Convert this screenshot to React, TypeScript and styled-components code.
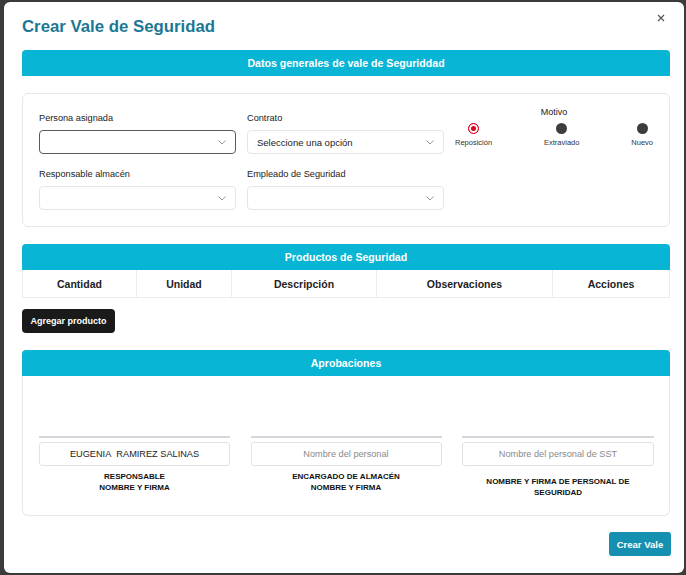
import React from "react";
import styled, { createGlobalStyle } from "styled-components";

const Global = createGlobalStyle`
  html, body { margin: 0; padding: 0; background: #3b3b3b; }
  body { font-family: "Liberation Sans", Arial, sans-serif; color: #222; }
  * { box-sizing: border-box; }
`;

const Page = styled.div`
  width: 686px;
  height: 575px;
  padding: 2px 2px 2px 4px;
  overflow: hidden;
`;

const Modal = styled.div`
  position: relative;
  height: 571px;
  background: #fff;
  border-radius: 6px;
  padding: 13px 14px 0 18px;
  display: flex;
  flex-direction: column;
`;

const Title = styled.h2`
  margin: 0;
  font-size: 16.8px;
  line-height: 24px;
  font-weight: 700;
  color: #1b7895;
`;

const Close = styled.button`
  position: absolute;
  top: 9px;
  right: 16px;
  border: 0;
  background: none;
  padding: 0;
  width: 14px;
  height: 14px;
  display: flex;
  align-items: center;
  justify-content: center;
  cursor: pointer;
`;

const Bar = styled.div<{ $mt: number }>`
  margin-top: ${(p) => p.$mt}px;
  height: 26px;
  background: #08b5d4;
  border-radius: 4px 4px 0 0;
  color: #fff;
  font-weight: 700;
  font-size: 10.6px;
  display: flex;
  align-items: center;
  justify-content: center;
`;

const Card = styled.div`
  margin-top: 17px;
  height: 134px;
  border: 1px solid #e4e7eb;
  border-radius: 6px;
  padding: 18px 16px 0 16px;
  display: grid;
  grid-template-columns: 197px 197px 1fr;
  column-gap: 11px;
  align-items: start;
  align-content: start;
`;

const Field = styled.div<{ $row?: number }>`
  display: flex;
  flex-direction: column;
  margin-top: ${(p) => (p.$row === 2 ? 14 : 0)}px;
`;

const Label = styled.label`
  font-size: 9.2px;
  line-height: 12px;
  color: #222;
  margin-bottom: 6px;
`;

const Select = styled.div<{ $focus?: boolean }>`
  height: 24px;
  border: 1px solid ${(p) => (p.$focus ? "#5a5a5a" : "#e2e5e9")};
  border-radius: 4px;
  padding: 0 9px;
  display: flex;
  align-items: center;
  justify-content: space-between;
  font-size: 9.5px;
  color: #222;
`;

const Motivo = styled.div`
  grid-row: 1 / span 2;
  grid-column: 3;
  margin-top: -6px;
  display: flex;
  flex-direction: column;
  align-items: center;
`;

const MotivoTitle = styled.div`
  font-size: 9px;
  line-height: 12px;
  color: #222;
`;

const Radios = styled.div`
  align-self: stretch;
  display: flex;
  justify-content: space-between;
  margin-top: 5px;
`;

const RadioItem = styled.div`
  display: flex;
  flex-direction: column;
  align-items: center;
  gap: 4px;
`;

const Dot = styled.span<{ $on?: boolean }>`
  width: 11px;
  height: 11px;
  border-radius: 50%;
  background: ${(p) => (p.$on ? "#e0001b" : "#3d3d3d")};
  box-shadow: ${(p) => (p.$on ? "inset 0 0 0 2px #fff" : "none")};
  border: ${(p) => (p.$on ? "1px solid #e0001b" : "0")};
`;

const RadioText = styled.span`
  font-size: 7.5px;
  line-height: 10px;
  color: #333;
`;

const Table = styled.div`
  display: grid;
  grid-template-columns: 114px 95px 145px 176px 1fr;
  height: 28px;
  border-left: 1px solid #ececec;
  border-bottom: 1px solid #ececec;
`;

const Th = styled.div`
  border-right: 1px solid #ececec;
  display: flex;
  align-items: center;
  justify-content: center;
  font-size: 10.5px;
  font-weight: 700;
  color: #222;
`;

const BlackButton = styled.button`
  margin-top: 11px;
  align-self: flex-start;
  height: 24px;
  width: 93px;
  border: 0;
  border-radius: 4px;
  background: #1a1a1a;
  color: #fff;
  font-family: inherit;
  font-size: 9px;
  font-weight: 700;
  padding: 0;
`;

const ApprovalBody = styled.div`
  height: 140px;
  border: 1px solid #e4e7eb;
  border-top: 0;
  border-radius: 0 0 6px 6px;
  padding: 60px 15px 0 16px;
  display: grid;
  grid-template-columns: 191px 191px 192px;
  justify-content: space-between;
`;

const Sign = styled.div`
  display: flex;
  flex-direction: column;
  align-items: stretch;
`;

const SignLine = styled.div`
  height: 2px;
  background: #d3d6db;
`;

const SignInput = styled.div<{ $empty?: boolean }>`
  margin-top: 4px;
  height: 24px;
  border: 1px solid #dfe2e6;
  border-radius: 3px;
  display: flex;
  align-items: center;
  justify-content: center;
  font-size: 9.2px;
  color: ${(p) => (p.$empty ? "#8a8a8a" : "#222")};
`;

const SignCaption = styled.div<{ $mt: number }>`
  margin-top: ${(p) => p.$mt}px;
  text-align: center;
  font-size: 8px;
  line-height: 11px;
  font-weight: 700;
  color: #111;
  padding: 0 12px;
`;

const Footer = styled.div`
  margin-top: 16px;
  display: flex;
  justify-content: flex-end;
  margin-right: -1px;
`;

const PrimaryButton = styled.button`
  height: 24px;
  width: 62px;
  border: 0;
  border-radius: 3px;
  background: #1690b1;
  color: #fff;
  font-family: inherit;
  font-size: 9.5px;
  font-weight: 700;
  padding: 0;
`;

const Chevron = () => (
  <svg width="8" height="5" viewBox="0 0 8 5" fill="none">
    <polyline points="0.5,0.5 4,4 7.5,0.5" stroke="#9a9a9a" strokeWidth="1" />
  </svg>
);

export default function App() {
  return (
    <>
      <Global />
      <Page>
        <Modal>
          <Title>Crear Vale de Seguridad</Title>
          <Close aria-label="Cerrar">
            <svg width="8" height="8" viewBox="0 0 8 8">
              <path d="M1 1L7 7M7 1L1 7" stroke="#555" strokeWidth="1.2" />
            </svg>
          </Close>

          <Bar $mt={11}>Datos generales de vale de Seguriddad</Bar>
          <Card>
            <Field>
              <Label>Persona asignada</Label>
              <Select $focus>
                <span />
                <Chevron />
              </Select>
            </Field>
            <Field>
              <Label>Contrato</Label>
              <Select>
                <span>Seleccione una opción</span>
                <Chevron />
              </Select>
            </Field>
            <Motivo>
              <MotivoTitle>Motivo</MotivoTitle>
              <Radios>
                <RadioItem>
                  <Dot $on />
                  <RadioText>Reposición</RadioText>
                </RadioItem>
                <RadioItem>
                  <Dot />
                  <RadioText>Extraviado</RadioText>
                </RadioItem>
                <RadioItem>
                  <Dot />
                  <RadioText>Nuevo</RadioText>
                </RadioItem>
              </Radios>
            </Motivo>
            <Field $row={2}>
              <Label>Responsable almacén</Label>
              <Select>
                <span />
                <Chevron />
              </Select>
            </Field>
            <Field $row={2}>
              <Label>Empleado de Seguridad</Label>
              <Select>
                <span />
                <Chevron />
              </Select>
            </Field>
          </Card>

          <Bar $mt={17}>Productos de Seguridad</Bar>
          <Table>
            <Th>Cantidad</Th>
            <Th>Unidad</Th>
            <Th>Descripción</Th>
            <Th>Observaciones</Th>
            <Th>Acciones</Th>
          </Table>
          <BlackButton>Agregar producto</BlackButton>

          <Bar $mt={17}>Aprobaciones</Bar>
          <ApprovalBody>
            <Sign>
              <SignLine />
              <SignInput>EUGENIA&nbsp; RAMIREZ SALINAS</SignInput>
              <SignCaption $mt={5}>
                RESPONSABLE
                <br />
                NOMBRE Y FIRMA
              </SignCaption>
            </Sign>
            <Sign>
              <SignLine />
              <SignInput $empty>Nombre del personal</SignInput>
              <SignCaption $mt={5}>
                ENCARGADO DE ALMACÉN
                <br />
                NOMBRE Y FIRMA
              </SignCaption>
            </Sign>
            <Sign>
              <SignLine />
              <SignInput $empty>Nombre del personal de SST</SignInput>
              <SignCaption $mt={10}>NOMBRE Y FIRMA DE PERSONAL DE SEGURIDAD</SignCaption>
            </Sign>
          </ApprovalBody>

          <Footer>
            <PrimaryButton>Crear Vale</PrimaryButton>
          </Footer>
        </Modal>
      </Page>
    </>
  );
}
